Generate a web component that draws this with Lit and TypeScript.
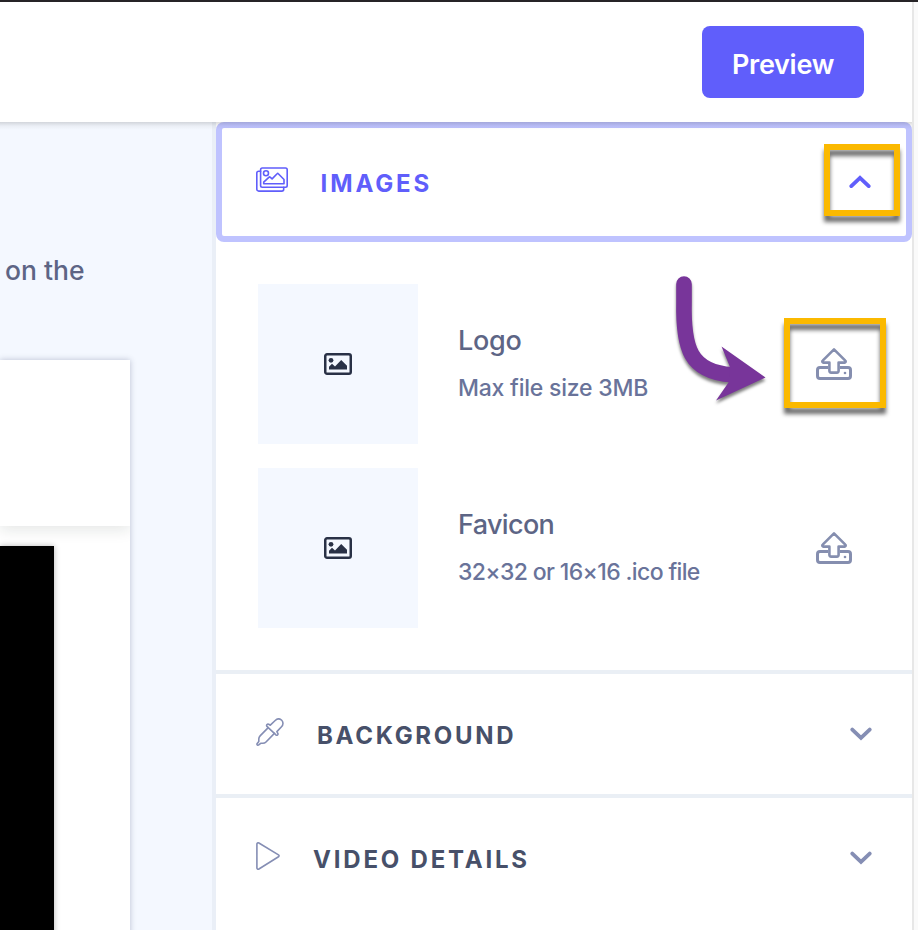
import { LitElement, html, css, svg } from "lit";
import { customElement } from "lit/decorators.js";

const uploadIcon = html`<svg class="upload" width="36" height="32" viewBox="0 0 36 32" fill="none" stroke="#858eaf" stroke-width="3" stroke-linejoin="round">
  <path d="M12.2 19.5H4a2.500 2.500 0 0 0-2.500 2.500v6a2.500 2.500 0 0 0 2.500 2.500h28a2.500 2.500 0 0 0 2.500-2.500v-6a2.500 2.500 0 0 0-2.500-2.500h-8.200"/>
  <path d="M18 1.400 6.700 12.700a1.100 1.100 0 0 0 .8 1.900h5.900v8.200a1.800 1.800 0 0 0 1.800 1.800h5.600a1.800 1.800 0 0 0 1.800-1.800v-8.200h5.900a1.100 1.100 0 0 0 .8-1.900Z" stroke-width="2.600"/>
  <circle cx="29" cy="25" r="1.300" fill="#858eaf" stroke="none"/>
</svg>`;

const photoIcon = html`<svg width="28" height="22" viewBox="0 0 28 22">
  <rect x="1.250" y="1.250" width="25.500" height="19.500" rx="1.800" fill="none" stroke="#293146" stroke-width="2.500"/>
  <circle cx="7" cy="7.300" r="2.400" fill="#293146"/>
  <path d="M5 16.500v-2.700l3-3 3 2.700 6.200-6.500 5.800 5.800v3.700Z" fill="#293146"/>
</svg>`;

const galleryIcon = html`<svg width="32" height="26" viewBox="0 0 32 26" fill="none" stroke="#605efb" stroke-width="1.600" stroke-linejoin="round" stroke-linecap="round">
  <rect x="4.600" y="1" width="26.600" height="19.200" rx="1.700"/>
  <path d="M4.600 4.200H2.700A1.900 1.900 0 0 0 .8 6.100v16.100a1.900 1.900 0 0 0 1.900 1.900h23.100a1.900 1.900 0 0 0 1.900-1.900v-2"/>
  <circle cx="10" cy="6.300" r="2.500"/>
  <path d="M7.700 16.800v-1.600l5.400-5.100q.5-.4 1 0l2 1.800 5-5.200q.6-.7 1.200 0L28 12.500v4.300Z"/>
</svg>`;

const dropperIcon = html`<svg width="28" height="28" viewBox="0 0 28 28" fill="none" stroke="#858eb4" stroke-width="1.600" stroke-linejoin="round" stroke-linecap="round">
  <path d="M12.200 9.600 11 8.400q-.8-1 0-1.900.7-.7 1.700-.2l1.600.9 4.900-4.700c2.100-2 4.800-1.900 6.500-.2 1.700 1.700 1.700 4.500-.2 6.400l-4.600 4.900.9 1.700q.5 1-.2 1.600-.9.700-1.800-.1l-1.400-1.400Z"/>
  <path d="M12.200 9.600 4.100 17.900q-1.300 1.300-1.300 3.200v2.300L1.200 25.400q-.6 1.200.2 1.700.6.300 1.300-.2l2-1.600h2.100q1.900 0 3.200-1.300l8.400-8.600"/>
</svg>`;

const playIcon = html`<svg width="24" height="28" viewBox="0 0 24 28" fill="none" stroke="#858eb4" stroke-width="1.600" stroke-linejoin="round">
  <path d="M.9 2.100C.9 1 1.900.5 2.900 1L22.500 12.900q1.200.9 0 1.900L2.900 27C1.900 27.500.9 27 .9 25.900Z"/>
</svg>`;

const chevron = (up: boolean, color: string) => html`<svg class="chev" width="22" height="14" viewBox="0 0 22 14" fill="none" stroke=${color} stroke-width="3.800" stroke-linecap="round" stroke-linejoin="miter">
  ${up ? svg`<path d="m2.300 11.100 8.700-8.200 8.700 8.200"/>` : svg`<path d="m2.300 2.600 8.700 8.300 8.700-8.300"/>`}
</svg>`;

@customElement("app-root")
export class AppRoot extends LitElement {
  static styles = css`
    * { box-sizing: border-box; }
    :host {
      display: flex; width: 918px; height: 930px; overflow: hidden; position: relative;
      border-top: 2px solid #262427; background: #fafafa;
      font-family: Inter, "Liberation Sans", sans-serif;
    }
    svg { display: block; flex: none; }
    .app { width: 912px; display: flex; flex-direction: column; background: #fff; }
    .rail { width: 2px; background: #e7e7e7; }
    .top {
      height: 120px; flex: none; position: relative; z-index: 2; background: #fff;
      display: flex; align-items: center; justify-content: flex-end; padding-right: 48px;
    }
    .shade { height: 8px; margin-bottom: -8px; flex: none; position: relative; z-index: 3;
      background: linear-gradient(rgba(0,0,0,.14), rgba(0,0,0,.04) 50%, transparent); }
    .preview {
      width: 162px; height: 72px; border: 0; border-radius: 8px; background: #605efb; color: #fff;
      font: 600 27px/32px Inter, sans-serif; letter-spacing: -0.3px; padding: 6px 0 0; text-align: center;
    }
    .main { flex: 1; min-height: 0; display: flex; }
    .canvas { width: 216px; flex: none; border-right: 4px solid #eaeff7; background: #f4f8ff; padding-top: 132px; overflow: hidden; }
    .caption { margin: 0 0 0 5px; font-size: 26.500px; line-height: 32px; font-weight: 500; color: #5d6585; height: 106px; white-space: nowrap; }
    .page { width: 130px; height: 600px; background: #fff; box-shadow: 0 0 6px rgba(40,50,90,.28); }
    .pagehead { height: 166px; background: #fff; box-shadow: 0 4px 14px rgba(20,40,30,.11); clip-path: inset(0 0 -30px 0); }
    .video { width: 54px; height: 400px; margin-top: 20px; background: #000; box-shadow: 0 0 6px rgba(0,0,0,.3); position: relative; }
    .panel { flex: 1; background: #fff; }
    .section { height: 120px; display: flex; align-items: center; padding: 0 40px; }
    .open { border: 6px solid #bfc3ff; border-radius: 8px; padding: 0 34px; }
    .title { margin: 0; flex: 1; font-size: 24px; line-height: 32px; font-weight: 700; letter-spacing: 2.700px; color: #475069; padding-top: 4px; white-space: nowrap; }
    .open .title { color: #605efb; margin-left: 32.500px; letter-spacing: 2.900px; }
    .bg { margin-left: 33px; }
    .vd { margin-left: 33px; letter-spacing: 2.800px; }
    .open .chev { margin-right: 1px; }
    .section svg:first-child { margin-top: -4px; }
    .rule { border-top: 4px solid #eaeff5; }
    .files { height: 428px; padding: 42px; display: flex; flex-direction: column; gap: 24px; }
    .file { display: flex; align-items: center; height: 160px; }
    .thumb { width: 160px; height: 160px; background: #f4f8ff; display: grid; place-items: center; }
    .info { flex: 1; margin-left: 40px; display: flex; flex-direction: column; gap: 15px; white-space: nowrap; }
    .name { font-size: 27px; line-height: 32px; font-weight: 500; color: #5d6585; }
    .n1 { letter-spacing: -0.300px; }
    .n2 { letter-spacing: -0.650px; }
    .hint { font-size: 23px; line-height: 32px; font-weight: 500; color: #69739a; }
    .h1 { letter-spacing: -0.220px; }
    .h2 { letter-spacing: -0.640px; }
    .upload { margin-right: 18px; }
    .mark { position: absolute; border: 6px solid #fbb900; filter: drop-shadow(0 6px 2px rgba(0,0,0,.58)); z-index: 5; }
    .m1 { left: 824px; top: 142px; width: 76px; height: 72px; }
    .m2 { left: 784px; top: 316px; width: 102px; height: 90px; }
    .arrow { position: absolute; left: 670px; top: 268px; z-index: 5; filter: drop-shadow(0 3px 1.500px rgba(0,0,0,.5)); }
  `;

  render() {
    return html`
      <div class="app">
        <header class="top"><button class="preview">Preview</button></header>
        <div class="shade"></div>
        <div class="main">
          <div class="canvas">
            <p class="caption">on the</p>
            <div class="page"><div class="pagehead"></div><div class="video"></div></div>
          </div>
          <aside class="panel">
            <div class="section open">${galleryIcon}<h2 class="title">IMAGES</h2>${chevron(true, "#605efb")}</div>
            <div class="files">
              <div class="file">
                <div class="thumb">${photoIcon}</div>
                <div class="info"><span class="name n1">Logo</span><span class="hint h1">Max file size 3MB</span></div>
                ${uploadIcon}
              </div>
              <div class="file">
                <div class="thumb">${photoIcon}</div>
                <div class="info"><span class="name n2">Favicon</span><span class="hint h2">32×32 or 16×16 .ico file</span></div>
                ${uploadIcon}
              </div>
            </div>
            <div class="rule"><div class="section">${dropperIcon}<h2 class="title bg">BACKGROUND</h2>${chevron(false, "#858eb4")}</div></div>
            <div class="rule"><div class="section">${playIcon}<h2 class="title vd">VIDEO DETAILS</h2>${chevron(false, "#858eb4")}</div></div>
          </aside>
        </div>
      </div>
      <div class="rail"></div>
      <div class="mark m1"></div>
      <div class="mark m2"></div>
      <svg class="arrow" width="104" height="140" viewBox="670 270 104 140">
        <path d="M684 284V302C683 348 690 372 732 374.800" fill="none" stroke="#78359a" stroke-width="15.600" stroke-linecap="round"/>
        <path d="M721.500 346.500 765.500 377.500 716 400.500 728.500 382.500 730 367Z" fill="#78359a"/>
      </svg>
    `;
  }
}
